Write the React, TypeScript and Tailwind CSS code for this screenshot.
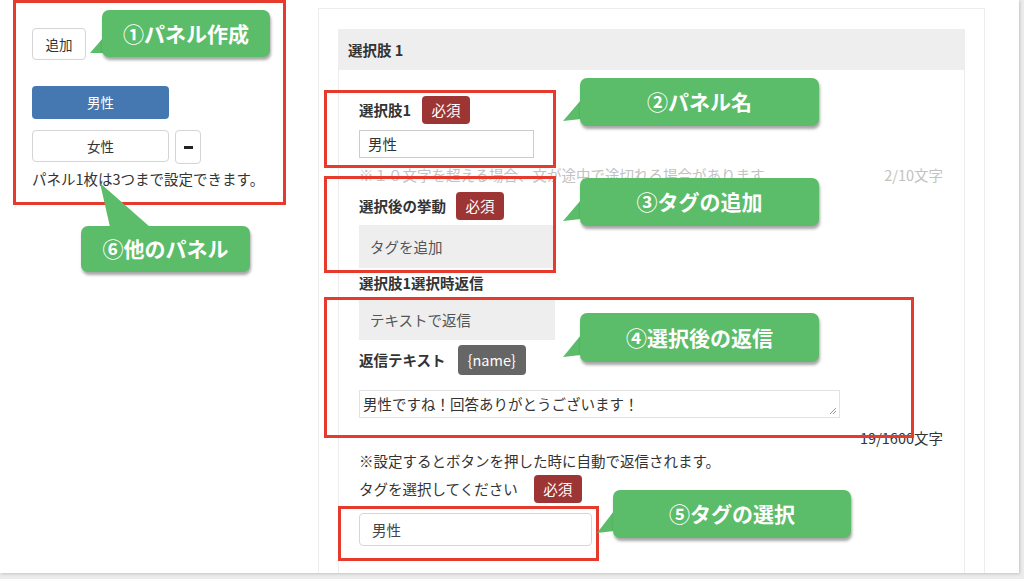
const callouts = [
  { text: "①パネル作成", box: "left-[102px] top-[10px] w-[168px] h-[47px]" },
  { text: "②パネル名", box: "left-[580px] top-[78px] w-[239px] h-[48px]" },
  { text: "③タグの追加", box: "left-[580px] top-[178px] w-[239px] h-[48px]" },
  { text: "④選択後の返信", box: "left-[580px] top-[313px] w-[239px] h-[49px]" },
  { text: "⑤タグの選択", box: "left-[613px] top-[490px] w-[238px] h-[48px]" },
  { text: "⑥他のパネル", box: "left-[81px] top-[226px] w-[169px] h-[46px]" },
];

const frames = [
  "left-[13px] top-[0px] w-[273px] h-[205px]",
  "left-[324px] top-[90px] w-[232px] h-[78px]",
  "left-[324px] top-[176px] w-[232px] h-[97px]",
  "left-[324px] top-[297px] w-[590px] h-[141px]",
  "left-[338px] top-[506px] w-[261px] h-[55px]",
];

function Badge({ children, dark }: { children: React.ReactNode; dark?: boolean }) {
  return (
    <span
      className={
        dark
          ? "flex h-[30px] items-center rounded-[4px] bg-[#666666] px-[10px] text-[14.5px] text-white"
          : "flex h-[28px] w-[48px] items-center justify-center rounded-[4px] bg-[#9c3533] text-[14.5px] text-white"
      }
    >
      {children}
    </span>
  );
}

export default function App() {
  return (
    <div className="h-[579px] w-[1024px] overflow-hidden bg-[#ececec] [font-family:'Noto_Sans_CJK_JP',sans-serif] text-[#333]">
      <div className="relative flex h-[573px] w-[1019px] bg-white shadow-[1px_1px_3px_rgba(0,0,0,0.18)]">
        {/* left: panel buttons */}
        <div className="w-[318px] shrink-0 pl-[32px] pt-[28px]">
          <div className="flex h-[32px] w-[54px] items-center justify-center rounded-[4px] border border-[#d4d4d4] text-[13.5px]">
            追加
          </div>
          <div className="mt-[26px] flex h-[33px] w-[137px] items-center justify-center rounded-[4px] bg-[#4577b1] text-[13.5px] text-white">
            男性
          </div>
          <div className="mt-[11px] flex items-start gap-[6px]">
            <div className="flex h-[32px] w-[137px] items-center justify-center rounded-[4px] border border-[#d4d4d4] text-[13.5px]">
              女性
            </div>
            <div className="flex h-[34px] w-[26px] items-center justify-center rounded-[4px] border border-[#d4d4d4]">
              <div className="h-[3px] w-[9px] bg-[#222]" />
            </div>
          </div>
          <div className="mt-[5px] text-[14.5px] leading-[20px]">パネル1枚は3つまで設定できます。</div>
        </div>

        {/* right: choice card */}
        <div className="mt-[8px] h-[565px] w-[667px] shrink-0 border-x border-t border-[#ececec] px-[19px] pt-[20px]">
          <div className="h-full border-x border-[#ececec]">
            <div className="-mx-px flex h-[41px] items-center bg-[#eeeeee] pl-[10px] text-[14.5px] font-bold">
              選択肢 1
            </div>
            <div className="pl-[20px] pr-[21px] text-[14.5px] leading-[20px]">
              <div className="mt-[26px] flex items-center gap-[11px]">
                <span className="font-bold">選択肢1</span>
                <Badge>必須</Badge>
              </div>
              <div className="mt-[6px] flex h-[28px] w-[175px] items-center border border-[#cccccc] px-[8px]">男性</div>
              <div className="mt-[7px] flex justify-between text-[#c2c2c2]">
                <span>※１０文字を超える場合、文が途中で途切れる場合があります。</span>
                <span>2/10文字</span>
              </div>
              <div className="mt-[7px] flex items-center gap-[10px]">
                <span className="font-bold">選択後の挙動</span>
                <Badge>必須</Badge>
              </div>
              <div className="mt-[5px] flex h-[43px] w-[197px] items-center bg-[#eeeeee] px-[11px] text-[#555]">
                タグを追加
              </div>
              <div className="mt-[5px] font-bold">選択肢1選択時返信</div>
              <div className="mt-[7px] flex h-[40px] w-[196px] items-center bg-[#eeeeee] px-[11px] text-[#555]">
                テキストで返信
              </div>
              <div className="mt-[5px] flex items-center gap-[12px]">
                <span className="font-bold">返信テキスト</span>
                <Badge dark>{"{name}"}</Badge>
              </div>
              <div className="relative mt-[15px] flex h-[28px] w-[481px] items-center border border-[#e2e2e2] px-[3px]">
                男性ですね！回答ありがとうございます！
                <svg className="absolute bottom-[2px] right-[2px]" width="8" height="8" viewBox="0 0 8 8">
                  <path d="M1 7L7 1M4 7L7 4" stroke="#999" strokeWidth="1" />
                </svg>
              </div>
              <div className="mt-[10px] text-right">19/1600文字</div>
              <div className="mt-[3px]">※設定するとボタンを押した時に自動で返信されます。</div>
              <div className="mt-[4px] flex items-center gap-[16px]">
                <span>タグを選択してください</span>
                <Badge>必須</Badge>
              </div>
              <div className="mt-[10px] flex h-[33px] w-[233px] items-center rounded-[4px] border border-[#d6d6d6] px-[12px] text-[#444]">
                男性
              </div>
            </div>
          </div>
        </div>

        {/* annotations */}
        {frames.map((f, i) => (
          <div key={i} className={`absolute ${f} border-[3px] border-[#e63a2d]`} />
        ))}
        <svg className="pointer-events-none absolute left-0 top-0" width="1019" height="573">
          <g fill="#5bbc69">
            <polygon points="103,38 90,53 103,53" />
            <polygon points="100,183 110,227 150,227" />
            <polygon points="581,100 563,121 581,119" />
            <polygon points="581,200 563,221 581,219" />
            <polygon points="581,335 563,357 581,355" />
            <polygon points="614,511 597,533 614,531" />
          </g>
        </svg>
        {callouts.map((c) => (
          <div
            key={c.text}
            className={`absolute ${c.box} flex items-center justify-center rounded-[7px] bg-[#5bbc69] text-[21px] font-bold text-white shadow-[1px_3px_3px_rgba(0,0,0,0.35)]`}
          >
            {c.text}
          </div>
        ))}
      </div>
    </div>
  );
}
